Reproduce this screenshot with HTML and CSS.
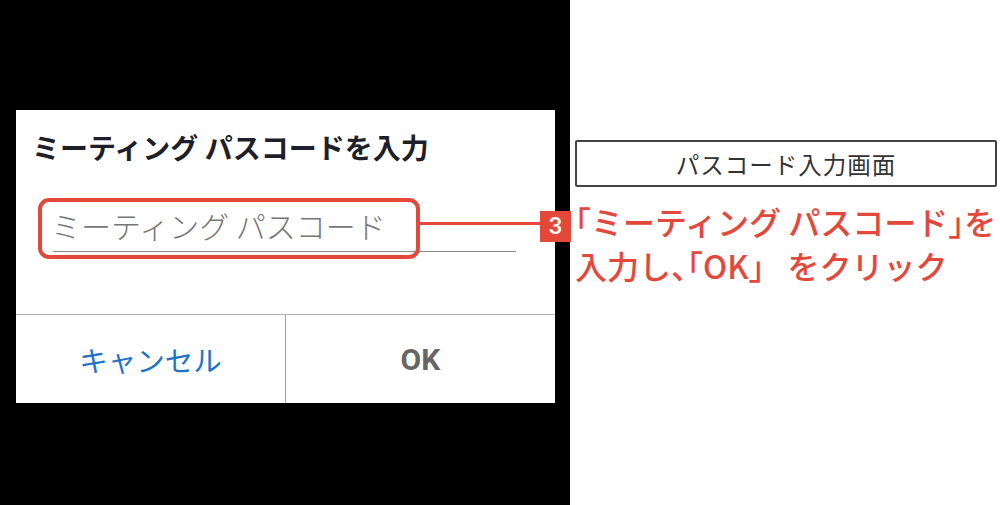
FILE: index.html
```html
<!DOCTYPE html>
<html lang="ja">
<head>
<meta charset="utf-8">
<link rel="stylesheet" href="styles.css">
</head>
<body>
<div class="page">
  <section class="phone">
    <div class="dialog">
      <h1 class="dialog-title">ミーティング パスコードを入力</h1>
      <div class="field">
        <span class="placeholder">ミーティング パスコード</span>
      </div>
      <div class="actions">
        <button class="btn cancel">キャンセル</button>
        <button class="btn ok">OK</button>
      </div>
    </div>
  </section>
  <section class="notes">
    <div class="screen-label">パスコード入力画面</div>
    <p class="step-text"><span class="half">「</span>ミーティング パスコード<span class="half">」</span>を<br>入力し<span class="half">、「</span>OK」 をクリック</p>
  </section>
  <div class="highlight"></div>
  <div class="connector"></div>
  <div class="badge">3</div>
</div>
</body>
</html>
```

FILE: styles.css
```css
* { box-sizing: border-box; }
html, body { margin: 0; padding: 0; }
body {
  width: 1000px;
  height: 505px;
  overflow: hidden;
  background: #fff;
  font-family: "Noto Sans CJK JP", "Noto Sans", sans-serif;
}
.page {
  position: relative;
  display: flex;
  width: 1000px;
  height: 505px;
}
.phone {
  flex: 0 0 570px;
  width: 570px;
  height: 505px;
  background: #000;
  padding: 110px 0 0 16px;
}
.dialog {
  width: 539px;
  height: 293px;
  background: #fff;
  display: flex;
  flex-direction: column;
}
.dialog-title {
  margin: 0;
  padding: 18px 0 0 16px;
  height: 76px;
  font-size: 28px;
  line-height: 38px;
  font-weight: 700;
  color: #1e1f29;
  letter-spacing: 0;
}
.field {
  margin: 0 39px 0 37px;
  height: 66px;
  padding-top: 22px;
  border-bottom: 1.5px solid #8a8a8a;
}
.placeholder {
  display: block;
  font-size: 30px;
  line-height: 34px;
  font-weight: 300;
  color: #777;
  margin-left: -2px;
}
.actions {
  margin-top: auto;
  height: 89px;
  display: flex;
  border-top: 1.5px solid #b4b4b4;
}
.btn {
  flex: 1;
  border: 0;
  background: #fff;
  font-family: inherit;
  font-size: 28.5px;
  padding: 0;
}
.cancel {
  color: #1f73c6;
  border-right: 1.5px solid #a0a0a0;
}
.ok {
  color: #666;
  font-weight: 700;
  font-size: 30px;
  font-family: "Roboto", "Noto Sans CJK JP", sans-serif;
}
.notes {
  flex: 1 1 auto;
  min-width: 0;
  padding: 140px 3px 0 5px;
}
.screen-label {
  height: 47px;
  border: 2.5px solid #444;
  border-radius: 2px;
  display: flex;
  align-items: center;
  justify-content: center;
  font-size: 23.5px;
  color: #333;
  letter-spacing: 1px;
}
.step-text {
  margin: 12px 0 0 0;
  font-size: 32px;
  line-height: 44px;
  color: #e4483a;
  font-weight: 500;
  white-space: nowrap;
}
.half {
  font-feature-settings: "halt";
}
.highlight {
  position: absolute;
  left: 38px;
  top: 198px;
  width: 382px;
  height: 61px;
  border: 4px solid #e4483a;
  border-radius: 11px;
}
.connector {
  position: absolute;
  left: 419px;
  top: 222px;
  width: 122px;
  height: 3px;
  background: #e4483a;
}
.badge {
  position: absolute;
  left: 540px;
  top: 211px;
  width: 31px;
  height: 31px;
  background: #e4483a;
  color: #fff;
  font-family: "Roboto", sans-serif;
  font-weight: 500;
  font-size: 24px;
  line-height: 31px;
  text-align: center;
}
```
